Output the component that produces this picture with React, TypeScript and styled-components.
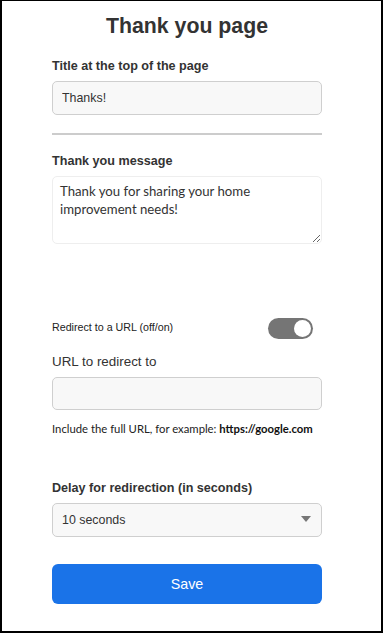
import React from "react";
import styled, { createGlobalStyle } from "styled-components";

const GlobalStyle = createGlobalStyle`
  html, body { margin: 0; padding: 0; background: #ffffff; }
  * { box-sizing: border-box; }
`;

const Frame = styled.div`
  width: 383px;
  height: 633px;
  border-style: solid;
  border-color: #000;
  border-width: 1px 2px 2px 2px;
  background: #fff;
  padding: 12.6px 0 0 50px;
  font-family: "Liberation Sans", Arial, sans-serif;
  color: #333;
`;

const Column = styled.div`
  width: 270px;
  display: flex;
  flex-direction: column;
`;

const Title = styled.h1`
  margin: 0;
  font-size: 21.3px;
  line-height: 24px;
  font-weight: 700;
  text-align: center;
  color: #333;
`;

const Label = styled.label<{ $top: number }>`
  display: block;
  margin: ${(p) => p.$top}px 0 6.9px 0;
  font-size: 12.6px;
  line-height: 15px;
  font-weight: 700;
  color: #333;
`;

const PlainLabel = styled.label`
  display: block;
  margin: 15.4px 0 6.6px 0;
  font-size: 13.4px;
  line-height: 16px;
  font-weight: 400;
  color: #333;
`;

const TextInput = styled.input<{ $h?: number }>`
  width: 100%;
  height: ${(p) => p.$h ?? 34}px;
  margin: 0;
  padding: 0 9px;
  border: 1px solid #cfcfcf;
  border-radius: 5px;
  background: #f8f8f8;
  font-family: "Liberation Sans", Arial, sans-serif;
  font-size: 12.4px;
  color: #333;
  outline: none;
`;

const Divider = styled.hr`
  width: 100%;
  height: 2px;
  margin: 18px 0 0 0;
  border: none;
  background: #cccccc;
`;

const MessageArea = styled.textarea`
  width: 100%;
  height: 68px;
  margin: 0;
  padding: 6.5px 7px;
  border: 1px solid #eeeeee;
  border-radius: 5px;
  background: #fff;
  font-family: Lato, "Open Sans", sans-serif;
  font-size: 13.2px;
  line-height: 17.3px;
  color: #333;
  resize: vertical;
  outline: none;
`;

const ToggleRow = styled.div`
  margin-top: 74px;
  height: 21px;
  display: flex;
  align-items: center;
  justify-content: space-between;
  padding-right: 9px;
`;

const ToggleText = styled.span`
  font-size: 10.7px;
  line-height: 13px;
  color: #222;
  margin-top: -2px;
`;

const Switch = styled.div<{ $on: boolean }>`
  width: 45px;
  height: 21px;
  border-radius: 11px;
  background: #757575;
  display: flex;
  align-items: center;
  justify-content: ${(p) => (p.$on ? "flex-end" : "flex-start")};
  padding: 0 2px;
`;

const Knob = styled.div`
  width: 17px;
  height: 17px;
  border-radius: 50%;
  background: #fff;
`;

const Helper = styled.p`
  margin: 11.7px 0 0 0;
  font-family: Lato, "Open Sans", sans-serif;
  font-size: 11.3px;
  line-height: 13px;
  color: #222;
  white-space: nowrap;
`;

const Strong = styled.b`
  font-weight: 700;
  color: #111;
`;

const SelectWrap = styled.div`
  position: relative;
  width: 100%;
`;

const Select = styled.select`
  width: 100%;
  height: 34px;
  margin: 0;
  padding: 0 9px;
  border: 1px solid #cfcfcf;
  border-radius: 5px;
  background: #f8f8f8;
  font-family: "Liberation Sans", Arial, sans-serif;
  font-size: 12.4px;
  color: #333;
  appearance: none;
  -webkit-appearance: none;
  outline: none;
`;

const Arrow = styled.svg`
  position: absolute;
  right: 11px;
  top: 13px;
  pointer-events: none;
`;

const SaveButton = styled.button`
  margin-top: 27px;
  width: 100%;
  height: 40px;
  border: none;
  border-radius: 6px;
  background: #1a73e8;
  color: #fff;
  font-family: "Liberation Sans", Arial, sans-serif;
  font-size: 14.3px;
  cursor: pointer;
`;

export default function App() {
  return (
    <>
      <GlobalStyle />
      <Frame>
        <Column>
          <Title>Thank you page</Title>
          <Label $top={21.5}>Title at the top of the page</Label>
          <TextInput defaultValue="Thanks!" />
          <Divider />
          <Label $top={19.1}>Thank you message</Label>
          <MessageArea defaultValue="Thank you for sharing your home improvement needs!" />
          <ToggleRow>
            <ToggleText>Redirect to a URL (off/on)</ToggleText>
            <Switch $on>
              <Knob />
            </Switch>
          </ToggleRow>
          <PlainLabel>URL to redirect to</PlainLabel>
          <TextInput $h={33} />
          <Helper>
            Include the full URL, for example: <Strong>https://google.com</Strong>
          </Helper>
          <Label $top={46.4}>Delay for redirection (in seconds)</Label>
          <SelectWrap>
            <Select defaultValue="10">
              <option value="5">5 seconds</option>
              <option value="10">10 seconds</option>
              <option value="15">15 seconds</option>
            </Select>
            <Arrow width="10" height="6" viewBox="0 0 10 6">
              <path d="M0 0 L10 0 L5 6 Z" fill="#777" />
            </Arrow>
          </SelectWrap>
          <SaveButton>Save</SaveButton>
        </Column>
      </Frame>
    </>
  );
}
